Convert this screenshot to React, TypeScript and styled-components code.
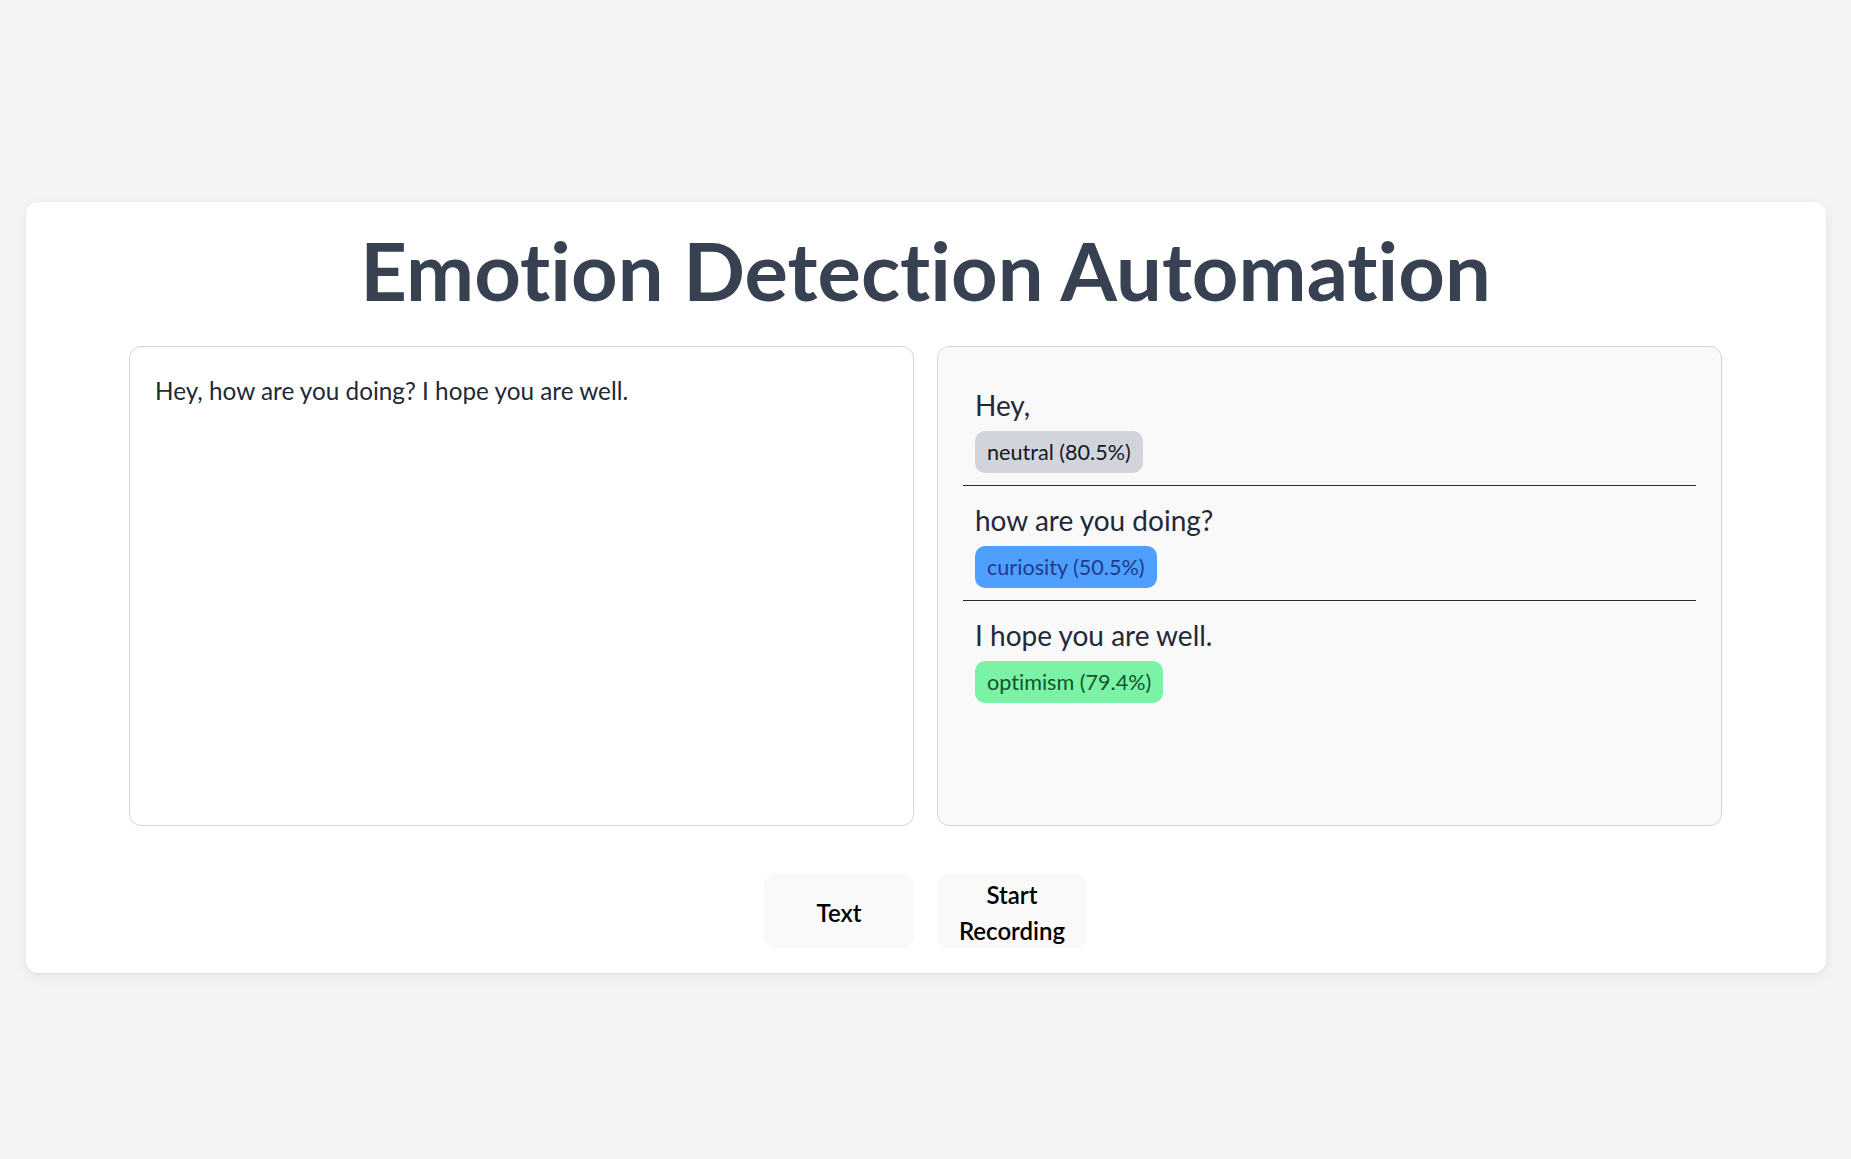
import React from 'react';
import styled, { createGlobalStyle } from 'styled-components';

const GlobalStyle = createGlobalStyle`
  body {
    background: #f3f4f6;
    font-family: "Lato", "Noto Sans", sans-serif;
    font-variant-ligatures: none;
    color: #1f2937;
  }
`;

type Tone = 'neutral' | 'curiosity' | 'optimism';

const tones: Record<Tone, { bg: string; fg: string }> = {
  neutral: { bg: '#d1d5db', fg: '#111827' },
  curiosity: { bg: '#4e9fff', fg: '#1e3a8a' },
  optimism: { bg: '#7af3a7', fg: '#14532d' },
};

interface Sentence {
  text: string;
  label: Tone;
  score: string;
}

const sentences: Sentence[] = [
  { text: 'Hey,', label: 'neutral', score: '80.5%' },
  { text: 'how are you doing?', label: 'curiosity', score: '50.5%' },
  { text: 'I hope you are well.', label: 'optimism', score: '79.4%' },
];

const Page = styled.div`
  min-height: 100vh;
  display: flex;
  align-items: center;
  justify-content: center;
`;

const Card = styled.main`
  width: 1800px;
  box-sizing: border-box;
  background: #ffffff;
  border-radius: 12px;
  box-shadow: 0 4px 14px rgba(15, 23, 42, 0.06), 0 1px 3px rgba(15, 23, 42, 0.05);
  padding: 20px 0 25px;
  display: flex;
  flex-direction: column;
  align-items: center;
`;

const Title = styled.h1`
  margin: 0 0 28px;
  font-size: 81.3px;
  line-height: 96px;
  font-weight: 700;
  color: #374151;
  text-align: center;
`;

const Panels = styled.section`
  display: grid;
  grid-template-columns: 785px 785px;
  gap: 23px;
`;

const Input = styled.textarea`
  box-sizing: border-box;
  height: 480px;
  margin: 0;
  padding: 26px 25px;
  border: 1px solid #d4d4d8;
  border-radius: 12px;
  background: #ffffff;
  font-family: "Lato", "Noto Sans", sans-serif;
  font-variant-ligatures: none;
  font-size: 24.3px;
  line-height: 36px;
  color: #1f2937;
  resize: none;
  outline: none;
`;

const Results = styled.div`
  box-sizing: border-box;
  height: 480px;
  padding: 24px 25px;
  border: 1px solid #d4d4d8;
  border-radius: 12px;
  background: #f9f9f9;
`;

const Item = styled.div`
  padding: 12px;
  border-bottom: 1px solid #1e293b;

  &:last-child {
    border-bottom: none;
  }
`;

const Phrase = styled.p`
  margin: 2px 0 6px;
  font-size: 28px;
  line-height: 40px;
  color: #1f2937;
`;

const Chip = styled.span<{ $tone: Tone }>`
  display: inline-block;
  padding: 6px 12px;
  border-radius: 10px;
  font-size: 21.6px;
  line-height: 30px;
  background: ${p => tones[p.$tone].bg};
  color: ${p => tones[p.$tone].fg};
`;

const Actions = styled.div`
  display: flex;
  gap: 23px;
  margin-top: 48px;
`;

const Button = styled.button`
  box-sizing: border-box;
  width: 150px;
  height: 74px;
  padding: 3px 12px 0;
  display: flex;
  align-items: center;
  justify-content: center;
  border: 1px solid transparent;
  border-radius: 12px;
  background: #f9f9f9;
  font-family: "Lato", "Noto Sans", sans-serif;
  font-variant-ligatures: none;
  font-size: 24px;
  line-height: 36px;
  font-weight: 600;
  color: #000000;
  text-align: center;
  cursor: pointer;
`;

export default function App() {
  return (
    <Page>
      <GlobalStyle />
      <Card>
        <Title>Emotion Detection Automation</Title>
        <Panels>
          <Input defaultValue="Hey, how are you doing? I hope you are well." />
          <Results>
            {sentences.map(s => (
              <Item key={s.text}>
                <Phrase>{s.text}</Phrase>
                <Chip $tone={s.label}>
                  {s.label} ({s.score})
                </Chip>
              </Item>
            ))}
          </Results>
        </Panels>
        <Actions>
          <Button>Text</Button>
          <Button>Start Recording</Button>
        </Actions>
      </Card>
    </Page>
  );
}
